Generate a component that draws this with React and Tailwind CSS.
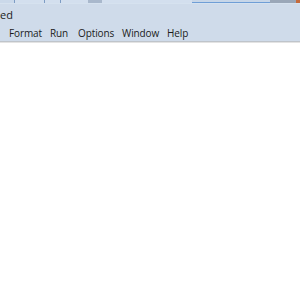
import React from 'react'

const menus = [
  { label: 'Format', w: 'w-[41px]' },
  { label: 'Run', w: 'w-[28px]' },
  { label: 'Options', w: 'w-[44px]' },
  { label: 'Window', w: 'w-[45px]' },
  { label: 'Help', w: 'w-[30px]' },
]

export default function App() {
  return (
    <div className="w-[300px] h-[300px] overflow-hidden bg-white flex flex-col" style={{ fontFamily: '"Open Sans", "Noto Sans", sans-serif' }}>
      {/* strip of the window behind */}
      <div className="h-[4px] flex bg-[#d6e2ef]">
        <div className="w-[14px] h-[3px] bg-[#cbd9ea]" />
        <div className="w-[1px] h-[3px] bg-[#7d9cc4]" />
        <div className="w-[29px] h-[3px] bg-[#d3dfee]" />
        <div className="w-[1px] h-[3px] bg-[#7d9cc4]" />
        <div className="w-[15px] h-[3px] bg-[#d3dfee]" />
        <div className="w-[1px] h-[3px] bg-[#7d9cc4]" />
        <div className="w-[27px] h-[3px] bg-[#d3dfee]" />
        <div className="w-[14px] h-[3px] bg-[#a9b8cc]" />
        <div className="w-[90px] h-[3px] bg-[#d3dfee]" />
        <div className="flex-1 flex flex-col">
          <div className="h-[2px] bg-[#c7d6e8]" />
          <div className="h-[1px] bg-[#6f9ed6]" />
        </div>
        <div className="w-[26px] h-[3px] bg-[#9aa7b8]" />
        <div className="w-[4px] h-[3px] bg-[#c56a3c]" />
      </div>
      <div className="h-[20px] bg-[#cfdbea] flex items-center">
        <span className="text-[11px] leading-none text-[#1b1b1b]">ed</span>
      </div>
      <div className="h-[17px] bg-[#cfdbea] flex items-end pb-[3px] pl-[9px]">
        {menus.map(m => (
          <span key={m.label} className={`${m.w} text-[10px] leading-none text-[#1b1b1b] tracking-[-0.1px]`}>{m.label}</span>
        ))}
      </div>
      <div className="h-[1px] bg-[#bfc4ca]" />
      <div className="h-[1px] bg-[#e3e3e3]" />
      <div className="flex-1 bg-white" />
    </div>
  )
}
